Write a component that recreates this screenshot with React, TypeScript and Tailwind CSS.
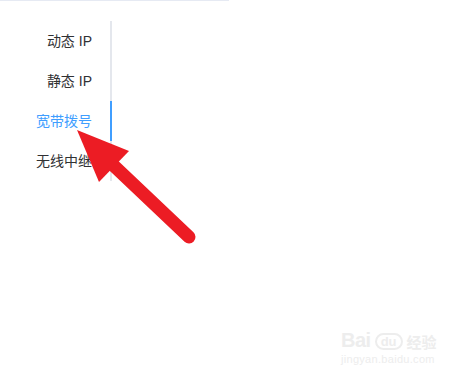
const tabs = ['动态 IP', '静态 IP', '宽带拨号', '无线中继'];

export default function App() {
  const active = 2;
  return (
    <div className="relative w-[458px] h-[381px] bg-white overflow-hidden" style={{ fontFamily: '"Liberation Sans", "Noto Sans CJK SC", sans-serif' }}>
      <div className="w-[229px] h-px bg-[#e6eaf3]"></div>

      <div className="mt-5 w-[112px] border-r-2 border-[#e4e7ed]">
        {tabs.map((t, i) => (
          <div
            key={t}
            className={`relative h-10 flex items-center justify-end pr-[18px] text-[14px] ${i === active ? 'text-[#409eff]' : 'text-[#303133]'}`}
          >
            {t}
            {i === active && <div className="absolute right-[-2px] top-0 h-10 w-[2px] bg-[#409eff]"></div>}
          </div>
        ))}
      </div>

      {/* red arrow annotation */}
      <svg className="absolute left-0 top-0 pointer-events-none" width="458" height="381">
        <line x1="112" y1="164" x2="189" y2="237" stroke="#ec1c24" strokeWidth="13" strokeLinecap="round" />
        <polygon points="77,130 129,151 99,182" fill="#ec1c24" />
      </svg>

      {/* watermark */}
      <div className="absolute left-[341px] top-[330px] text-[#ededed] leading-none">
        <div className="flex items-end gap-1">
          <span className="text-[20px] font-bold tracking-tight">Bai</span>
          <span className="text-[13px] font-bold rounded-full border-2 border-[#ededed] px-1">du</span>
          <span className="text-[15px] font-bold">经验</span>
        </div>
        <div className="text-[11px] mt-1 tracking-[0.3px]">jingyan.baidu.com</div>
      </div>
    </div>
  );
}
